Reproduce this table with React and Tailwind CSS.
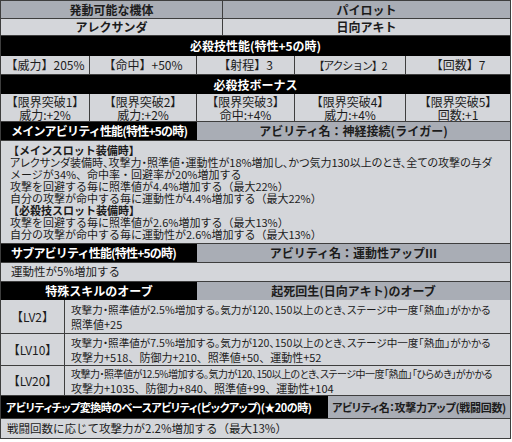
const lines1 = [
  "アレクサンダ装備時、攻撃力・照準値・運動性が18%増加し、かつ気力130以上のとき、全ての攻撃の与ダ",
  "メージが34%、命中率・回避率が20%増加する",
  "攻撃を回避する毎に照準値が4.4%増加する（最大22%）",
  "自分の攻撃が命中する毎に運動性が4.4%増加する（最大22%）",
];
const lines2 = [
  "攻撃を回避する毎に照準値が2.6%増加する（最大13%）",
  "自分の攻撃が命中する毎に運動性が2.6%増加する（最大13%）",
];

const stats = ["【威力】205%", "【命中】+50%", "【射程】3", "【アクション】2", "【回数】7"];
const limits = [
  ["【限界突破1】", "威力:+2%"],
  ["【限界突破2】", "威力:+2%"],
  ["【限界突破3】", "命中:+4%"],
  ["【限界突破4】", "威力:+4%"],
  ["【限界突破5】", "回数:+1"],
];

const orbs = [
  {
    lv: "【LV2】",
    h: "h-[34px]",
    a: "攻撃力・照準値が2.5%増加する。気力が120、150以上のとき、ステージ中一度「熱血」がかかる",
    b: "照準値+25",
    tight: false,
  },
  {
    lv: "【LV10】",
    h: "h-[32px]",
    a: "攻撃力・照準値が7.5%増加する。気力が120、150以上のとき、ステージ中一度「熱血」がかかる",
    b: "攻撃力+518、防御力+210、照準値+50、運動性+52",
    tight: false,
  },
  {
    lv: "【LV20】",
    h: "h-[30px]",
    a: "攻撃力・照準値が12.5%増加する。気力が120、150以上のとき、ステージ中一度「熱血」「ひらめき」がかかる",
    b: "攻撃力+1035、防御力+840、照準値+99、運動性+104",
    tight: true,
  },
];

export default function App() {
  return (
    <div className="w-[512px] h-[442px] bg-white font-['Noto_Sans_CJK_JP','Noto_Sans_CJK_SC',sans-serif] text-[#1c1c1c] overflow-hidden">
      <div className="w-[511px] border border-[#3e3e3e] bg-[#d4d6da]">
        {/* 機体 / パイロット */}
        <div className="grid grid-cols-[222px_1fr] h-[18px] border-b border-[#3e3e3e] bg-[#a9adb5] font-bold text-[12px] leading-none">
          <div className="flex items-center justify-center border-r border-[#3e3e3e]">発動可能な機体</div>
          <div className="flex items-center justify-center">パイロット</div>
        </div>
        <div className="grid grid-cols-[222px_1fr] h-[17px] border-b border-[#3e3e3e] font-bold text-[12px] leading-none">
          <div className="flex items-center justify-center border-r border-[#3e3e3e]">アレクサンダ</div>
          <div className="flex items-center justify-center">日向アキト</div>
        </div>

        {/* 必殺技性能 */}
        <div className="h-[20px] bg-black text-white font-bold text-[12px] flex items-center justify-center">
          必殺技性能(特性+5の時)
        </div>
        <div className="grid grid-cols-[89px_107px_98px_111px_1fr] h-[19px] border-b border-[#3e3e3e] text-[12px] leading-none">
          {stats.map((s, i) => (
            <div
              key={i}
              className={
                i < 4
                  ? "flex items-center justify-center border-r border-[#3e3e3e] whitespace-nowrap"
                  : "flex items-center justify-center whitespace-nowrap"
              }
            >
              {i === 3 ? <span className="text-[11px] tracking-[-1.2px]">{s}</span> : s}
            </div>
          ))}
        </div>

        {/* 必殺技ボーナス */}
        <div className="h-[19px] bg-black text-white font-bold text-[12px] flex items-center justify-center">
          必殺技ボーナス
        </div>
        <div className="grid grid-cols-[89px_107px_98px_111px_1fr] h-[28px] border-b border-[#3e3e3e] text-[12px] leading-[13px]">
          {limits.map(([t, v], i) => (
            <div
              key={i}
              className={
                i < 4
                  ? "flex flex-col items-center justify-center border-r border-[#3e3e3e] whitespace-nowrap"
                  : "flex flex-col items-center justify-center whitespace-nowrap"
              }
            >
              <span>{t}</span>
              <span>{v}</span>
            </div>
          ))}
        </div>

        {/* メインアビリティ */}
        <div className="grid grid-cols-[196px_1fr] h-[19px] border-b border-[#3e3e3e] font-bold text-[12px]">
          <div className="bg-black text-white flex items-center pl-[10px] whitespace-nowrap tracking-[-0.8px]">メインアビリティ性能(特性+5の時)</div>
          <div className="bg-[#a9adb5] flex items-center justify-center whitespace-nowrap">アビリティ名：神経接続(ライガー)</div>
        </div>
        <div className="h-[103px] border-b border-[#3e3e3e] pt-[3px] pl-[9px] text-[11px] leading-[12px] whitespace-nowrap">
          <div className="font-bold -ml-[2px]">【メインスロット装備時】</div>
          {lines1.map((l, i) => (
            <div key={l} className={i === 0 ? "[font-feature-settings:'palt']" : ""}>
              {l}
            </div>
          ))}
          <div className="font-bold -ml-[2px]">【必殺技スロット装備時】</div>
          {lines2.map((l) => (
            <div key={l}>{l}</div>
          ))}
        </div>

        {/* サブアビリティ */}
        <div className="grid grid-cols-[196px_1fr] h-[19px] border-b border-[#3e3e3e] font-bold text-[12px]">
          <div className="bg-black text-white flex items-center pl-[10px] whitespace-nowrap tracking-[-0.8px]">サブアビリティ性能(特性+5の時)</div>
          <div className="bg-[#a9adb5] flex items-center justify-center whitespace-nowrap">アビリティ名：運動性アップⅢ</div>
        </div>
        <div className="h-[19px] border-b border-[#3e3e3e] flex items-center pl-[10px] text-[11.5px]">
          運動性が5%増加する
        </div>

        {/* オーブ */}
        <div className="grid grid-cols-[196px_1fr] h-[18px] border-b border-[#3e3e3e] font-bold text-[12px]">
          <div className="bg-black text-white flex items-center justify-center">特殊スキルのオーブ</div>
          <div className="bg-[#a9adb5] flex items-center justify-center whitespace-nowrap">起死回生(日向アキト)のオーブ</div>
        </div>
        {orbs.map((o) => (
          <div key={o.lv} className={`grid grid-cols-[64px_1fr] border-b border-[#3e3e3e] ${o.h}`}>
            <div className="flex items-center justify-center border-r border-[#3e3e3e] text-[12px]">{o.lv}</div>
            <div className="flex flex-col justify-center pl-[6px] leading-[14px] whitespace-nowrap overflow-hidden">
              <span
                className={
                  o.tight
                    ? "text-[10px] tracking-[-0.5px] [font-feature-settings:'palt']"
                    : "text-[10.6px] [font-feature-settings:'palt']"
                }
              >
                {o.a}
              </span>
              <span className="text-[11px]">{o.b}</span>
            </div>
          </div>
        ))}

        {/* アビリティチップ */}
        <div className="grid grid-cols-[327px_1fr] h-[23px] border-b border-[#3e3e3e] font-bold text-[11px] [font-feature-settings:'palt']">
          <div className="bg-black text-white flex items-center pl-[5px] whitespace-nowrap tracking-[-0.5px]">
            アビリティチップ変換時のベースアビリティ(ピックアップ)(★20の時)
          </div>
          <div className="bg-[#a9adb5] flex items-center justify-center whitespace-nowrap tracking-[-0.3px]">
            アビリティ名：攻撃力アップ(戦闘回数)
          </div>
        </div>
        <div className="h-[19px] flex items-center pl-[6px] text-[11.5px]">
          戦闘回数に応じて攻撃力が2.2%増加する（最大13%）
        </div>
      </div>
    </div>
  );
}
